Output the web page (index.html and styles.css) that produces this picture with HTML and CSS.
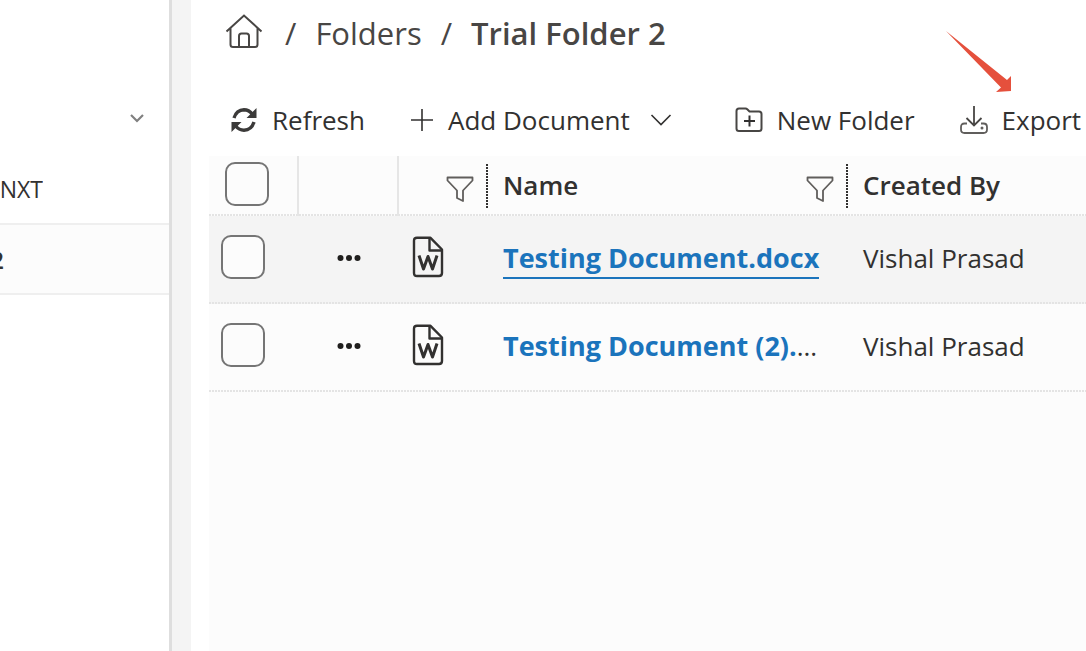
FILE: index.html
```html
<!DOCTYPE html>
<html lang="en">
<head>
  <meta charset="UTF-8" />
  <title>Trial Folder 2</title>
  <link rel="stylesheet" href="styles.css">
</head>
<body>

  <div class="app">
    <nav class="sidebar">
      <button class="side-toggle" aria-label="Collapse">
        <svg width="16" height="10" viewBox="0 0 16 10"><path d="M2 2l6 6 6-6" fill="none" stroke="#808080" stroke-width="2.2"/></svg>
      </button>
      <a class="side-item" href="#"><span class="side-text">NXT</span></a>
      <a class="side-item current" href="#"><span class="side-text">2</span></a>
    </nav>

    <main class="main">
      <nav class="breadcrumb">
        <a class="home" href="#" aria-label="Home">
          <svg width="38" height="36" viewBox="0 0 38 36" fill="none" stroke="#484644" stroke-width="2">
            <path d="M1.5 18.500L19 2.500l17.500 16M5.500 15v16.500q0 2.500 2.500 2.500h22q2.500 0 2.500-2.500V15" />
            <path d="M14 34V23q0-2.500 2.500-2.500h5q2.500 0 2.500 2.500v11" />
          </svg>
        </a>
        <span>/</span>
        <a href="#">Folders</a>
        <span>/</span>
        <strong>Trial Folder 2</strong>
      </nav>

      <div class="toolbar">
        <button class="tool">
          <svg width="28" height="26" viewBox="0 0 28 26" fill="none" stroke="#3b3a39" stroke-width="3.400">
            <path d="M4 11Q6.500 3 14 2.800q5 0 8.500 4.500M24 15q-2.500 8-10 8.200-5 0-8.500-4.500" />
            <path d="M26.500 1v10H16.500zM1.500 25V15h10z" fill="#3b3a39" stroke="none" />
          </svg>
          Refresh
        </button>
        <button class="tool">
          <svg width="24" height="24" viewBox="0 0 24 24"><path d="M12 1v22M1 12h22" stroke="#323130" stroke-width="1.600"/></svg>
          Add Document
          <svg class="caret" width="22" height="14" viewBox="0 0 22 14"><path d="M1.500 2L11 11.500 20.500 2" fill="none" stroke="#323130" stroke-width="1.600"/></svg>
        </button>
        <button class="tool folder">
          <svg width="28" height="26" viewBox="0 0 28 26" fill="none" stroke="#484644" stroke-width="2">
            <path d="M1.500 4q0-2.500 2.500-2.500h6.500q1 0 2 1l2 2H24q2.500 0 2.500 2.500v14.500q0 2.500-2.500 2.500H4q-2.500 0-2.500-2.500z" />
            <path d="M14.500 8.500v11M9 14h11" stroke="#323130" />
          </svg>
          New Folder
        </button>
        <button class="tool export">
          <svg width="28" height="28" viewBox="0 0 28 28" fill="none" stroke="#605e5c" stroke-width="1.800">
            <path d="M14 0v19M6.500 12l7.500 7.500 7.500-7.500" stroke="#484644" />
            <path d="M7 17.500H4.500Q1 17.500 1 21v2.500Q1 27 4.500 27h19q3.500 0 3.500-3.500V21q0-3.500-3.500-3.500H21" />
            <circle cx="22" cy="22" r="1.500" fill="#605e5c" stroke="none" />
          </svg>
          Export
          <svg class="arrow" width="66" height="61" viewBox="0 0 66 61"><path d="M0 0L61 49l4-4v15l-15 1 5-4.500z" fill="#e5503c"/></svg>
        </button>
      </div>

      <div class="grid">
        <table>
          <colgroup>
            <col class="col-check"><col class="col-menu"><col class="col-type"><col class="col-name"><col>
          </colgroup>
          <thead>
            <tr>
              <th class="lined check"><input type="checkbox" aria-label="Select all"></th>
              <th class="lined"></th>
              <th>
                <div class="head">
                  <button class="filter" aria-label="Filter type">
                    <svg width="28" height="26" viewBox="0 0 28 26"><path d="M1.500 1.500h25v3L17 14.500v10.500l-6-3v-7.500L1.500 4.500z" fill="none" stroke="#605e5c" stroke-width="1.800" stroke-linejoin="round"/></svg>
                  </button>
                  <span class="handle"></span>
                </div>
              </th>
              <th>
                <div class="head">
                  <span class="label">Name</span>
                  <button class="filter" aria-label="Filter name">
                    <svg width="28" height="26" viewBox="0 0 28 26"><path d="M1.500 1.500h25v3L17 14.500v10.500l-6-3v-7.500L1.500 4.500z" fill="none" stroke="#605e5c" stroke-width="1.800" stroke-linejoin="round"/></svg>
                  </button>
                  <span class="handle"></span>
                </div>
              </th>
              <th><div class="head"><span class="label">Created By</span></div></th>
            </tr>
          </thead>
          <tbody>
            <tr class="hover">
              <td class="check"><input type="checkbox" aria-label="Select Testing Document.docx"></td>
              <td>
                <button class="more" aria-label="More actions">
                  <svg width="26" height="8" viewBox="0 0 26 8" fill="#201f1e"><circle cx="4.500" cy="4" r="3"/><circle cx="13" cy="4" r="3"/><circle cx="21.500" cy="4" r="3"/></svg>
                </button>
              </td>
              <td class="type">
                <svg width="32" height="42" viewBox="0 0 32 42" fill="none" stroke="#323130" stroke-width="2.400" stroke-linejoin="round">
                  <path d="M5 1.800h13.500L30 13.500V37q0 3-3 3H5q-3 0-3-3V4.800q0-3 3-3z" />
                  <path d="M17.500 2v12.500H30" />
                  <path d="M7 19.500L11.500 33 16 20.500 20.500 33 25 19.500" stroke-width="3" />
                </svg>
              </td>
              <td class="name"><a class="underlined" href="#">Testing Document.docx</a></td>
              <td class="person">Vishal Prasad</td>
            </tr>
            <tr>
              <td class="check"><input type="checkbox" aria-label="Select Testing Document (2)"></td>
              <td>
                <button class="more" aria-label="More actions">
                  <svg width="26" height="8" viewBox="0 0 26 8" fill="#201f1e"><circle cx="4.500" cy="4" r="3"/><circle cx="13" cy="4" r="3"/><circle cx="21.500" cy="4" r="3"/></svg>
                </button>
              </td>
              <td class="type">
                <svg width="32" height="42" viewBox="0 0 32 42" fill="none" stroke="#323130" stroke-width="2.400" stroke-linejoin="round">
                  <path d="M5 1.800h13.500L30 13.500V37q0 3-3 3H5q-3 0-3-3V4.800q0-3 3-3z" />
                  <path d="M17.500 2v12.500H30" />
                  <path d="M7 19.500L11.500 33 16 20.500 20.500 33 25 19.500" stroke-width="3" />
                </svg>
              </td>
              <td class="name"><a href="#">Testing Document (2).</a>...</td>
              <td class="person">Vishal Prasad</td>
            </tr>
          </tbody>
        </table>
      </div>
    </main>
  </div>

</body>
</html>
```
FILE: styles.css
```css
* {
  box-sizing: border-box;
}

body {
  margin: 0;
  font-family: "Open Sans", "Noto Sans", sans-serif;
  font-size: 26px;
  line-height: 36px;
  color: #323130;
  background: #fff;
}

a {
  color: inherit;
  text-decoration: none;
}

button {
  font: inherit;
  color: inherit;
  background: none;
  border: none;
  padding: 0;
  cursor: pointer;
}

svg {
  display: block;
  flex-shrink: 0;
}

.app {
  display: flex;
  min-height: 100vh;
  overflow: hidden;
}

/* left navigation */
.sidebar {
  width: 172px;
  flex-shrink: 0;
  padding-top: 83px;
  border-right: 3px solid #dedede;
  font-size: 23px;
}

.side-toggle {
  display: flex;
  align-items: center;
  justify-content: flex-end;
  width: 100%;
  height: 70px;
  padding-right: 24px;
}

.side-item {
  display: flex;
  align-items: center;
  height: 70px;
}

.side-item.current {
  height: 72px;
  background: #fcfcfc;
  border-top: 2px solid #efefef;
  border-bottom: 2px solid #efefef;
  font-weight: 600;
}

.side-text {
  display: flex;
  justify-content: flex-end;
  width: 43px;
  padding-top: 2px;
  overflow: hidden;
}

.current .side-text {
  width: 4px;
}

/* content area */
.main {
  flex: 1;
  min-width: 0;
  display: flex;
  flex-direction: column;
  border-left: 19px solid #f4f4f4;
}

.breadcrumb {
  display: flex;
  align-items: center;
  gap: 19px;
  height: 66px;
  padding-left: 34px;
  font-size: 31px;
  color: #484644;
  white-space: nowrap;
}

.breadcrumb strong {
  font-weight: 600;
}

.home {
  padding: 0 3px 4px 0;
}

.toolbar {
  display: flex;
  align-items: center;
  gap: 45px;
  height: 90px;
  padding: 18px 0 0 39px;
}

.tool {
  display: flex;
  align-items: center;
  gap: 14px;
  white-space: nowrap;
}

.tool .caret {
  margin-left: 6px;
}

.tool.folder {
  margin-left: 18px;
}

.tool.export {
  position: relative;
}

/* callout over the toolbar */
.arrow {
  position: absolute;
  left: -14px;
  bottom: calc(100% + 10px);
}

/* document list */
.grid {
  flex: 1;
  margin-left: 18px;
  background: #fcfcfc;
}

table {
  width: 100%;
  table-layout: fixed;
  border-collapse: collapse;
}

.col-check {
  width: 89px;
}

.col-menu {
  width: 100px;
}

.col-type {
  width: 90px;
}

.col-name {
  width: 360px;
}

tr {
  background: repeating-linear-gradient(90deg, #e4e4e4 0 2px, transparent 2px 3px) bottom / 100% 2px no-repeat;
}

tr.hover {
  background-color: #f4f4f4;
}

th,
td {
  padding: 0;
  text-align: left;
  white-space: nowrap;
}

th {
  height: 60px;
  font-weight: 600;
}

td {
  height: 88px;
  padding-bottom: 4px;
}

.lined {
  border-right: 2px solid #e6e6e6;
}

td.check {
  padding-left: 12px;
}

th.check {
  padding-left: 16px;
}

input[type="checkbox"] {
  appearance: none;
  display: block;
  width: 44px;
  height: 44px;
  margin: 0 0 4px;
  border: 2px solid #757575;
  border-radius: 10px;
  background: #fcfcfc;
}

td input[type="checkbox"] {
  margin-bottom: 2px;
}

.head {
  display: flex;
  align-items: center;
  justify-content: flex-end;
  height: 60px;
}

.label {
  flex: 1;
  padding: 0 0 2px 15px;
}

.filter {
  padding-top: 6px;
}

.handle {
  width: 2px;
  height: 45px;
  margin-left: 12px;
  background: repeating-linear-gradient(#323130 0 2px, transparent 2px 3px);
}

.more {
  display: block;
  margin-left: 38px;
}

.type {
  padding-left: 14px;
}

.type svg {
  margin-bottom: 2px;
}

.name,
.person {
  padding-left: 15px;
  overflow: hidden;
  text-overflow: ellipsis;
}

.name a {
  color: #1b74bc;
  font-size: 27px;
  font-weight: 700;
}

.name a.underlined {
  padding-bottom: 1px;
  border-bottom: 2px solid #1b74bc;
}
```
